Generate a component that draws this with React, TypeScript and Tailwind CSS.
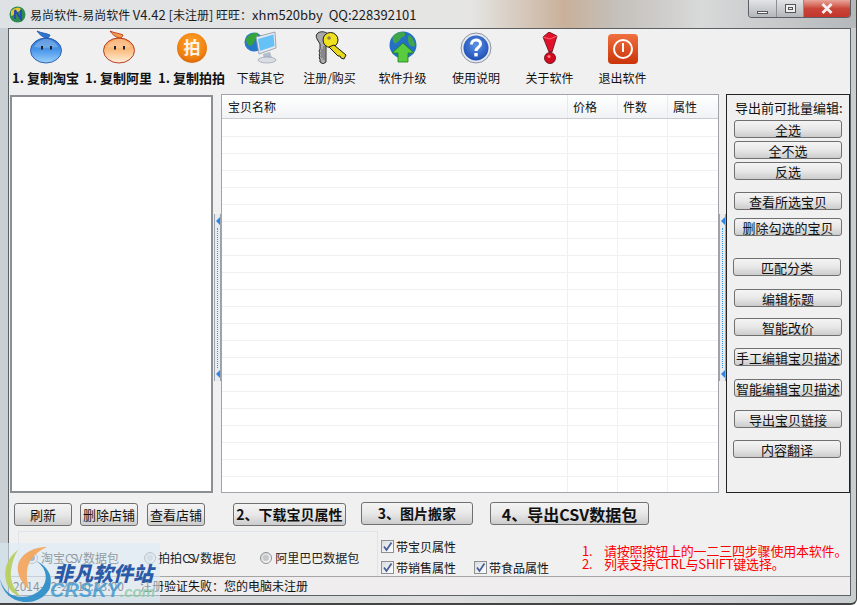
const font = { fontFamily: '"Noto Sans CJK SC", "Liberation Sans", sans-serif' }

function Wangwang({ id, top, mid, low, rim }: { id: string; top: string; mid: string; low: string; rim: string }) {
  return (
    <svg width="34" height="34" viewBox="0 0 34 34">
      <defs>
        <linearGradient id={id} x1="0" y1="0" x2="0" y2="1">
          <stop offset="0%" stopColor={top} />
          <stop offset="50%" stopColor={mid} />
          <stop offset="100%" stopColor={low} />
        </linearGradient>
      </defs>
      <path d="M17 8C13 7 10 4 8 1C12 3 17 3 21 5C21 6 20 7 19 8Z" fill={top} stroke={rim} strokeWidth="0.8" />
      <ellipse cx="17" cy="20.500" rx="15.500" ry="12.500" fill={`url(#${id})`} stroke={rim} strokeWidth="0.9" />
      <path d="M5 17c3-6 8-8 12-8s9 2 12 8c-7 1-17 1-24 0Z" fill="#fff" opacity="0.25" />
      <rect x="12" y="16" width="2" height="3.500" fill="#222" />
      <rect x="21" y="16" width="2" height="3.500" fill="#222" />
    </svg>
  )
}

function PaipaiIcon() {
  return (
    <svg width="32" height="32" viewBox="0 0 32 32">
      <defs>
        <radialGradient id="pp" cx="50%" cy="35%" r="70%">
          <stop offset="0%" stopColor="#ffa62e" />
          <stop offset="70%" stopColor="#f08010" />
          <stop offset="100%" stopColor="#d06206" />
        </radialGradient>
      </defs>
      <circle cx="16" cy="16" r="15" fill="url(#pp)" />
      <text x="16" y="22" textAnchor="middle" fontSize="17" fontWeight="700" fill="#fff" opacity="0.9">拍</text>
    </svg>
  )
}

function MonitorIcon() {
  return (
    <svg width="34" height="34" viewBox="0 0 34 34">
      <circle cx="10" cy="12" r="9.500" fill="#2878c8" />
      <path d="M2 9c3-5 8-7 12-6 1 3-1 5-3 6 0 3-2 6-5 7-2-1-4-4-4-7Z" fill="#35a53a" />
      <path d="M12 7l19-5 1 16-17 6Z" fill="#e4e9f0" stroke="#8b95a6" strokeWidth="0.8" />
      <path d="M14 9l15.500-4.500 1 11.500-14.500 5Z" fill="#66c2f6" />
      <path d="M19 24l7-2 2 6-8 2Z" fill="#b4bdca" />
      <ellipse cx="23" cy="30" rx="9" ry="3" fill="#d9dde4" stroke="#8a94a3" strokeWidth="0.6" />
    </svg>
  )
}

function KeysIcon() {
  return (
    <svg width="34" height="34" viewBox="0 0 34 34">
      <path d="M4 4c2-3 8-3 11 0l1 6-3 4v18l-3 2-3-2v-3l-1-1 1-2-1-1 1-2-1-2 1-2v-5l-3-5c-1-2-1-4 0-5Z" fill="#a9a9a9" stroke="#2a2a2a" strokeWidth="1" />
      <path d="M9 19v9M11 16v14" stroke="#555" strokeWidth="0.8" />
      <circle cx="17.500" cy="10" r="7.500" fill="#efe020" stroke="#1a1a1a" strokeWidth="1" />
      <path d="M21 15l12 10-2 4-3-1-1-2-2 0-9-9Z" fill="#e8d81e" stroke="#1a1a1a" strokeWidth="1" />
      <circle cx="16" cy="8" r="1.800" fill="#8a8050" />
    </svg>
  )
}

function UpgradeIcon() {
  return (
    <svg width="32" height="34" viewBox="0 0 32 34">
      <circle cx="16" cy="15" r="13.500" fill="#2470c4" />
      <path d="M6 6c4-4 9-5 12-3 1 3-2 4-4 5-1 3-4 4-6 6-2-2-3-5-2-8ZM22 5c3 2 6 6 6 11-2 1-5 0-6-2-1-3-2-6 0-9Z" fill="#3fa548" />
      <path d="M16 13l11 10h-6v9H11v-9H5Z" fill="#58cc3e" stroke="#1d7d1c" strokeWidth="0.8" />
    </svg>
  )
}

function HelpIcon() {
  return (
    <svg width="32" height="32" viewBox="0 0 32 32">
      <defs>
        <radialGradient id="hp" cx="50%" cy="40%" r="60%">
          <stop offset="0%" stopColor="#5c92e6" />
          <stop offset="100%" stopColor="#1f4fb5" />
        </radialGradient>
      </defs>
      <circle cx="16" cy="16" r="15" fill="#e6e9ef" stroke="#8b93a3" strokeWidth="1" />
      <circle cx="16" cy="16" r="12.500" fill="url(#hp)" />
      <path d="M11.500 12.500c0-6 9-6 9-.5 0 3.500-4.500 3.500-4.500 7" fill="none" stroke="#fff" strokeWidth="3" />
      <rect x="14.300" y="21" width="3.400" height="3.400" fill="#fff" />
    </svg>
  )
}

function AlertIcon() {
  return (
    <svg width="16" height="32" viewBox="0 0 16 32">
      <path d="M1 5l6-5 8 4-5 16H7Z" fill="#e3102a" stroke="#5a0510" strokeWidth="0.8" />
      <path d="M1 5l7 2 7-3" fill="none" stroke="#ff8a95" strokeWidth="0.7" />
      <circle cx="8" cy="26" r="5.500" fill="#d30b1f" stroke="#5a0510" strokeWidth="0.8" />
      <circle cx="7" cy="24.500" r="1.500" fill="#ff7a85" />
    </svg>
  )
}

function PowerIcon() {
  return (
    <svg width="30" height="30" viewBox="0 0 30 30">
      <defs>
        <linearGradient id="pw" x1="0" y1="0" x2="0" y2="1">
          <stop offset="0%" stopColor="#f0703f" />
          <stop offset="100%" stopColor="#c93408" />
        </linearGradient>
      </defs>
      <rect width="30" height="30" rx="4" fill="url(#pw)" />
      <circle cx="15" cy="15" r="9" fill="none" stroke="#fff" strokeWidth="2" />
      <rect x="14" y="9" width="2" height="9" fill="#fff" />
    </svg>
  )
}

const tools = [
  { icon: <Wangwang id="ww1" top="#2c74d2" mid="#4c98ea" low="#9ad2fc" rim="#1f55a8" />, label: '1. 复制淘宝', bold: true, w: 'w-[73px]' },
  { icon: <Wangwang id="ww2" top="#f59a4c" mid="#fbbe82" low="#fff0dc" rim="#b02a10" />, label: '1. 复制阿里', bold: true, w: 'w-[73px]' },
  { icon: <PaipaiIcon />, label: '1. 复制拍拍', bold: true, w: 'w-[73px]' },
  { icon: <MonitorIcon />, label: '下载其它', w: 'w-[65px]' },
  { icon: <KeysIcon />, label: '注册/购买', w: 'w-[73px]' },
  { icon: <UpgradeIcon />, label: '软件升级', w: 'w-[73px]' },
  { icon: <HelpIcon />, label: '使用说明', w: 'w-[74px]' },
  { icon: <AlertIcon />, label: '关于软件', w: 'w-[73px]' },
  { icon: <PowerIcon />, label: '退出软件', w: 'w-[73px]' },
]

const sideTop = ['全选', '全不选', '反选']
const sideRest = [
  { label: '查看所选宝贝', cls: 'mt-[12px]' },
  { label: '删除勾选的宝贝', cls: 'mt-[8px]' },
  { label: '匹配分类', cls: 'mt-[22px] -ml-px' },
  { label: '编辑标题', cls: 'mt-[13px]' },
  { label: '智能改价', cls: 'mt-[11px]' },
  { label: '手工编辑宝贝描述', cls: 'mt-[12px]' },
  { label: '智能编辑宝贝描述', cls: 'mt-[13px]' },
  { label: '导出宝贝链接', cls: 'mt-[13px]' },
  { label: '内容翻译', cls: 'mt-[12px] -ml-px' },
]

const btn = 'flex items-center justify-center whitespace-nowrap rounded-[3px] border border-[#707070] bg-gradient-to-b from-[#f4f4f4] via-[#e8e8e8] to-[#cccccc] text-[#111]'

function Splitter({ width }: { width: string }) {
  return (
    <div className={`flex flex-none flex-col items-end pt-[120px] ${width}`}>
      <div className="flex h-[167px] w-[7px] flex-col items-center justify-between border-x border-[#9aa3ae] bg-[#e8ebef] py-[3px]">
        <div className="h-0 w-0 border-y-[4px] border-r-[4px] border-y-transparent border-r-[#2f86e0]" />
        <div className="h-[140px] w-px border-l border-dotted border-[#3d96e6]" />
        <div className="h-0 w-0 border-y-[4px] border-r-[4px] border-y-transparent border-r-[#2f86e0]" />
      </div>
    </div>
  )
}

function Check({ label, cls }: { label: string; cls?: string }) {
  return (
    <div className={`flex items-center gap-[2px] text-[12px] leading-none ${cls ?? ''}`}>
      <div className="flex h-[13px] w-[13px] items-center justify-center border border-[#8e8f8f] bg-gradient-to-br from-[#d8dce2] to-white">
        <svg width="11" height="11" viewBox="0 0 11 11">
          <path d="M2 5.500L4.500 9L9.500 1.500" fill="none" stroke="#4a5f97" strokeWidth="1.800" />
        </svg>
      </div>
      <span>{label}</span>
    </div>
  )
}

function Radio({ name, checked, gap, cls }: { name: string; checked?: boolean; gap: string; cls?: string }) {
  return (
    <div className={`flex items-center text-[12px] leading-none ${gap} ${cls ?? ''}`}>
      <div className="flex h-[12px] w-[12px] flex-none items-center justify-center rounded-full border border-[#8e8f8f] bg-gradient-to-br from-[#d0d2d6] to-white">
        <div className={checked ? 'h-[6px] w-[6px] rounded-full bg-[#5c6a80]' : 'h-[6px] w-[6px] rounded-full bg-[#c5c7cb]'} />
      </div>
      <span className="whitespace-nowrap">{name}</span>
    </div>
  )
}

function Csv() {
  return <span className="tracking-[-2px]">CSV</span>
}

function Watermark() {
  return (
    <div className="absolute bottom-0 left-0 h-[60px] w-[160px] overflow-hidden bg-[#dcebf5]/60">
      <svg className="absolute left-0 top-0" width="60" height="60" viewBox="0 0 60 60">
        <path d="M47 4C30 4 16 14 18 28C19 36 24 42 29 46C26 36 26 26 30 18C34 12 40 7 47 4Z" fill="#f2a860" opacity="0.95" />
        <path d="M18 7C8 14 3 26 6 38C8 46 14 52 20 53C14 46 10 38 11 28C12 20 14 13 18 7Z" fill="#b8d060" opacity="0.95" />
        <path d="M36 18C46 24 49 36 42 45C34 54 22 56 12 52C6 49 2 43 0 36C2 50 14 60 28 59C44 58 54 46 50 32C48 26 42 20 36 18Z" fill="#2f8fc8" opacity="0.95" />
      </svg>
      <div className="absolute left-[53px] top-[17px] whitespace-nowrap text-[20px] font-black italic leading-[26px] text-[#2a5aa8]">非凡软件站</div>
      <div className="absolute left-[50px] top-[34px] flex items-baseline whitespace-nowrap font-['Liberation_Sans',sans-serif] font-bold italic leading-[26px] opacity-80">
        <span className="text-[20px] text-[#3e98cf]">CRSKY</span>
        <span className="text-[15px] text-[#8ec9a6]">.com</span>
      </div>
    </div>
  )
}

export default function App() {
  return (
    <div style={font} className="relative flex h-[605px] w-[857px] flex-col overflow-hidden rounded-br-[6px] border-r border-b-[2px] border-[#444] bg-gradient-to-r from-[#c9cfd3] via-[#dedfde] to-[#c8cdd0] text-[#111]">
      {/* title bar */}
      <div className="relative h-[28px] flex-none bg-[linear-gradient(90deg,#dfe2e4_0%,#e5e5e3_55%,#c9b09a_66%,#c4c0bb_72%,#d8d9d9_82%,#b5b8bb_100%)]">
        <div className="flex h-full items-center pl-[9px]">
          <svg width="17" height="17" viewBox="0 0 17 17">
            <circle cx="8.500" cy="8.500" r="8" fill="#2f8a4f" />
            <path d="M2 5c3-3 6-4 9-3 2 3-3 4-5 5-1 2-3 3-4 3Z" fill="#e8c62e" />
            <path d="M6 4v9M6 4l6 9V4" fill="none" stroke="#2646b8" strokeWidth="1.800" />
          </svg>
          <span className="ml-[4px] whitespace-pre text-[12px] leading-none text-[#1b1b1b]">
            易尚软件-易尚软件 <span className="text-[13px]">V4.42 [</span>未注册<span className="text-[13px]">]</span> 旺旺：<span className="text-[13px]">xhm520bby  QQ:228392101</span>
          </span>
        </div>
        <div className="absolute right-[5px] top-0 flex h-[18px] w-[103px] overflow-hidden rounded-b-[4px] border border-t-0 border-[#5b5f63]">
          <div className="flex w-[28px] items-end justify-center border-r border-[#8b8f93] bg-gradient-to-b from-[#e2e4e6] to-[#b4b7ba] pb-[3px]">
            <div className="h-[3px] w-[11px] border border-[#555] bg-white" />
          </div>
          <div className="flex w-[27px] items-center justify-center border-r border-[#8b8f93] bg-gradient-to-b from-[#e2e4e6] to-[#b4b7ba]">
            <div className="flex h-[9px] w-[11px] items-center justify-center border border-[#555] bg-[#eee]">
              <div className="h-[3px] w-[5px] border border-[#555]" />
            </div>
          </div>
          <div className="flex flex-1 items-center justify-center bg-gradient-to-b from-[#e8a59b] via-[#c9463a] to-[#c4352a]">
            <svg width="14" height="11" viewBox="0 0 14 11">
              <path d="M2.500 1L11.500 10M11.500 1L2.500 10" stroke="#f5f0f0" strokeWidth="2.800" />
            </svg>
          </div>
        </div>
      </div>

      {/* client area */}
      <div className="ml-[8px] mr-[5px] flex h-[568px] flex-none flex-col border border-[#5c6166] bg-[#f0f0f0]">
        {/* toolbar */}
        <div className="flex h-[65px] flex-none items-start">
          {tools.map((t) => (
            <div key={t.label} className={`flex flex-none flex-col items-center ${t.w}`}>
              <div className="flex h-[35px] items-end justify-center">{t.icon}</div>
              <span className={`mt-[7px] whitespace-pre leading-[14px] ${t.bold ? 'text-[13px] font-bold' : 'text-[12px]'}`}>{t.label}</span>
            </div>
          ))}
        </div>

        {/* panels */}
        <div className="flex h-[399px] flex-none pl-px">
          <div className="mt-px w-[203px] border-[2px] border-[#8b8f93] bg-white" />
          <Splitter width="w-[8px]" />
          <div className="w-[498px] flex-none overflow-hidden border border-[#a0a4a8] bg-white">
            <div className="flex h-[24px] border-b border-[#c8ccd0] bg-gradient-to-b from-white to-[#f0f2f5] text-[12px] leading-[24px]">
              <div className="w-[346px] border-r border-[#e8e9ea] pl-[6px]">宝贝名称</div>
              <div className="w-[50px] border-r border-[#e8e9ea] pl-[5px]">价格</div>
              <div className="w-[50px] border-r border-[#e8e9ea] pl-[5px]">件数</div>
              <div className="flex-1 pl-[5px]">属性</div>
            </div>
            {Array.from({ length: 22 }).map((_, i) => (
              <div key={i} className={`flex border-b border-[#eef0f2] ${i === 0 ? 'h-[18px]' : 'h-[17px]'}`}>
                <div className="w-[346px] border-r border-[#f0f0f0]" />
                <div className="w-[50px] border-r border-[#f0f0f0]" />
                <div className="w-[50px] border-r border-[#f0f0f0]" />
                <div className="flex-1" />
              </div>
            ))}
          </div>
          <Splitter width="w-[7px]" />
          <div className="flex w-[124px] flex-none flex-col border border-[#222] pl-[7px] text-[13px]">
            <div className="mt-[5px] h-[16px] whitespace-nowrap pl-[1px] leading-[16px]">导出前可批量编辑:</div>
            <div className="mt-[4px] flex flex-col gap-[3px]">
              {sideTop.map((label) => (
                <div key={label} className={`${btn} h-[18px] w-[108px] leading-none`}>{label}</div>
              ))}
            </div>
            {sideRest.map((b) => (
              <div key={b.label} className={`${btn} h-[18px] w-[108px] flex-none leading-none ${b.cls}`}>{b.label}</div>
            ))}
          </div>
        </div>

        {/* action buttons */}
        <div className="mt-[10px] flex h-[23px] flex-none items-start pl-[5px] text-[13px]">
          <div className={`${btn} h-[23px] w-[58px]`}>刷新</div>
          <div className={`${btn} ml-[8px] h-[23px] w-[58px]`}>删除店铺</div>
          <div className={`${btn} ml-[9px] h-[23px] w-[58px]`}>查看店铺</div>
          <div className={`${btn} ml-[28px] h-[23px] w-[113px] text-[14px] font-bold`}>2、下载宝贝属性</div>
          <div className={`${btn} ml-[15px] -mt-px h-[23px] w-[112px] text-[14px] font-bold`}>3、图片搬家</div>
          <div className={`${btn} ml-[17px] -mt-px h-[23px] w-[159px] text-[16px] font-bold`}>4、导出CSV数据包</div>
        </div>

        {/* options */}
        <div className="mt-[5px] flex h-[45px] flex-none pl-[9px]">
          <div className="flex w-[360px] items-center border border-b-0 border-[#dfe4ea] pl-[7px] pt-[8px] text-[#222]">
            <Radio name="淘宝" checked gap="gap-[3px]" />
            <span className="whitespace-nowrap text-[12px] leading-none"><Csv />&nbsp;数据包</span>
            <Radio name="拍拍" gap="gap-[2px]" cls="ml-[25px]" />
            <span className="whitespace-nowrap text-[12px] leading-none"><Csv />&nbsp;数据包</span>
            <Radio name="阿里巴巴数据包" gap="gap-[3px]" cls="ml-[24px]" />
          </div>
          <div className="ml-[3px] flex w-[201px] flex-none flex-col gap-[8px] pt-[9px]">
            <Check label="带宝贝属性" />
            <div className="flex">
              <Check label="带销售属性" />
              <Check label="带食品属性" cls="ml-[18px]" />
            </div>
          </div>
          <div className="flex flex-col pt-[13px] text-[13px] leading-[13px] tracking-[-0.2px] text-[#f00]">
            <div className="flex whitespace-pre"><span className="w-[22px]">1.</span>请按照按钮上的一二三四步骤使用本软件。</div>
            <div className="flex whitespace-pre"><span className="w-[22px]">2.</span>列表支持CTRL与SHIFT键选择。</div>
          </div>
        </div>

        {/* status bar */}
        <div className="flex flex-1 items-center border-t border-[#a5a5a5] bg-[#efeded] pl-[4px] text-[12px] leading-none">
          <span className="w-[127px] flex-none whitespace-pre">2014-02-27 10:23:00</span>
          <span className="whitespace-pre">注册验证失败：您的电脑未注册</span>
        </div>
      </div>

      <Watermark />
    </div>
  )
}
